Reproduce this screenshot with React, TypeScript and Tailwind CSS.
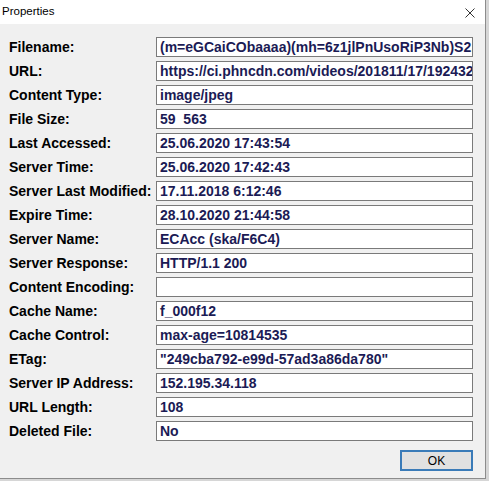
const rows: [string, string][] = [
  ["Filename:", "(m=eGCaiCObaaaa)(mh=6z1jlPnUsoRiP3Nb)S2.jpg"],
  ["URL:", "https://ci.phncdn.com/videos/201811/17/192432581/original/(m=eGCaiCObaaaa)"],
  ["Content Type:", "image/jpeg"],
  ["File Size:", "59\u00a0\u00a0563"],
  ["Last Accessed:", "25.06.2020 17:43:54"],
  ["Server Time:", "25.06.2020 17:42:43"],
  ["Server Last Modified:", "17.11.2018 6:12:46"],
  ["Expire Time:", "28.10.2020 21:44:58"],
  ["Server Name:", "ECAcc (ska/F6C4)"],
  ["Server Response:", "HTTP/1.1 200"],
  ["Content Encoding:", ""],
  ["Cache Name:", "f_000f12"],
  ["Cache Control:", "max-age=10814535"],
  ["ETag:", "\"249cba792-e99d-57ad3a86da780\""],
  ["Server IP Address:", "152.195.34.118"],
  ["URL Length:", "108"],
  ["Deleted File:", "No"],
]

function PropertyRow({ label, value }: { label: string; value: string }) {
  return (
    <div className="flex h-[20px] items-center">
      <div className="w-[156px] shrink-0 whitespace-nowrap pl-[9px] text-[14px] font-bold leading-none text-black">
        {label}
      </div>
      <div className="flex h-[20px] w-[317px] shrink-0 items-center overflow-hidden whitespace-nowrap border border-[#7a7a7a] bg-white pl-[3px] text-[14px] font-bold leading-none text-[#1b1b55]">
        {value}
      </div>
    </div>
  )
}

export default function App() {
  return (
    <div className="flex h-[481px] w-[489px] bg-[#d6d6d6] font-['Liberation_Sans',Arial,sans-serif]">
      <div className="flex h-[479px] w-[486px] flex-col border-r border-b border-[#8c8c8c] bg-[#f0f0f0]">
        {/* Title bar */}
        <div className="flex h-[24px] items-center justify-between bg-white pl-[2px] pr-[10px]">
          <span className="text-[11.5px] text-black">Properties</span>
          <svg width="10" height="10" viewBox="0 0 10 10" className="mt-[1px]">
            <path d="M0.5 0.5 L9.5 9.5 M9.5 0.5 L0.5 9.5" stroke="#333" strokeWidth="1" fill="none" />
          </svg>
        </div>

        {/* Fields */}
        <div className="flex flex-col gap-[4px] pt-[13px]">
          {rows.map(([label, value]) => (
            <PropertyRow key={label} label={label} value={value} />
          ))}
        </div>

        {/* Buttons */}
        <div className="flex justify-end pt-[9px] pr-[12px]">
          <button className="flex h-[21px] w-[73px] items-center justify-center border-2 border-[#3a7bb8] bg-[#e1e1e1] text-[12px] text-black">
            OK
          </button>
        </div>
      </div>
    </div>
  )
}
